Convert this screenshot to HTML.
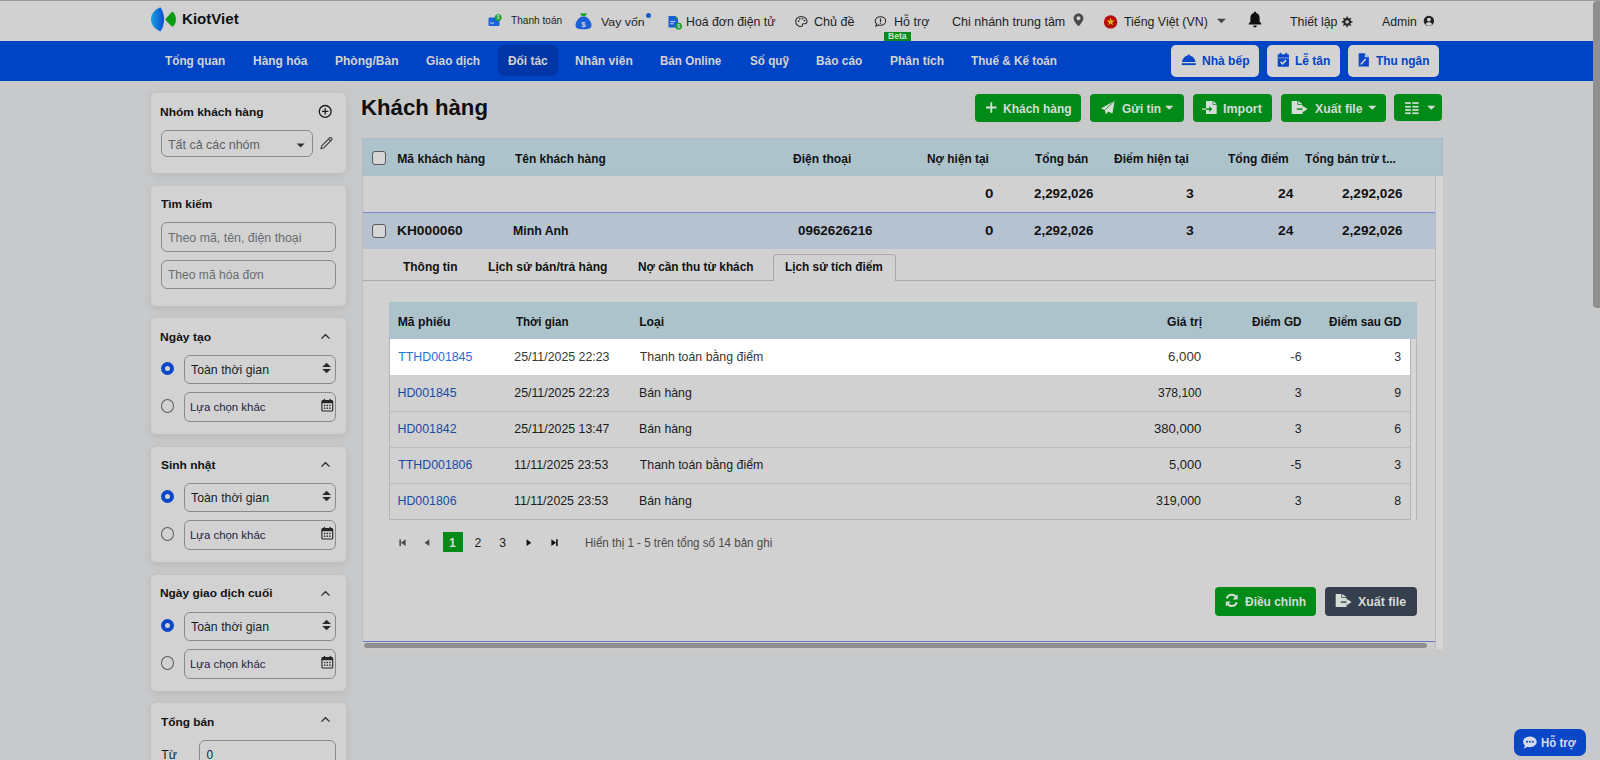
<!DOCTYPE html>
<html><head><meta charset="utf-8"><title>KiotViet - Khách hàng</title>
<style>
html,body{margin:0;padding:0;width:1600px;height:760px;overflow:hidden;background:#c8c9cb;font-family:"Liberation Sans",sans-serif;}
.t{position:absolute;white-space:nowrap;transform-origin:0 0;}
.r{position:absolute;}
svg.r{overflow:visible}
</style></head><body>
<div class="r" style="left:0px;top:0px;width:1600px;height:41px;background:#d1d1d1"></div>
<div class="r" style="left:0px;top:0px;width:1600px;height:1px;background:#9c9e9d"></div>
<svg class="r" style="left:150px;top:6px" width="28" height="27" viewBox="0 0 28 27"><defs><linearGradient id="lg" x1="0" y1="0" x2="1" y2="0"><stop offset="0" stop-color="#1ca2dc"/><stop offset="1" stop-color="#0a4ed2"/></linearGradient></defs><path d="M10.5 1.2 C4.5 3.5,1 8,1 13.2 C1 18.5,4.5 23,10.5 25.4 C13 22,14 17.5,14 13.2 C14 9,13 4.5,10.5 1.2Z" fill="url(#lg)"/><path d="M15 13.4 L21.5 6.3 Q22.7 5.3 23.6 6.4 C25.3 8.5,25.9 11,25.9 13.4 C25.9 15.8,25.3 18.2,23.6 20 Q22.7 21 21.5 20.2Z" fill="#0b9c12"/></svg>
<div class="t" style="left:182.44px;top:11.43px;font-size:15.55px;line-height:15.55px;font-weight:700;color:#111;transform:scaleX(0.9697);">KiotViet</div>
<svg class="r" style="left:488px;top:14px" width="14" height="13" viewBox="0 0 14 13"><rect x="0.5" y="3.5" width="11" height="8.5" rx="1.2" fill="#1a62d6"/><rect x="2" y="8.5" width="4" height="1.2" fill="#9cc0f0"/><circle cx="10.2" cy="3.6" r="3.4" fill="#16a02a"/><text x="10.2" y="5.4" font-size="5" text-anchor="middle" fill="#d3d3d3" font-family="Liberation Sans" font-weight="700">$</text></svg>
<div class="t" style="left:510.80px;top:15.74px;font-size:10.47px;line-height:10.47px;color:#1e1e1e;transform:scaleX(0.9652);">Thanh toán</div>
<svg class="r" style="left:575px;top:12px" width="17" height="18" viewBox="0 0 17 18"><path d="M5 1.2 L12 1.2 L10.5 4 L6.5 4Z" fill="#1aa82a"/><path d="M6.3 4.5 C2.5 7,0.3 10.5,0.5 13.5 C0.7 16.3,3 17.2,8.5 17.2 C14 17.2,16.3 16.3,16.5 13.5 C16.7 10.5,14.5 7,10.7 4.5Z" fill="#1a5fd8"/><text x="8.5" y="14.5" font-size="8" text-anchor="middle" fill="#d3d3d3" font-family="Liberation Sans" font-weight="700">$</text></svg>
<div class="t" style="left:600.80px;top:16.03px;font-size:11.77px;line-height:11.77px;color:#1e1e1e;transform:scaleX(1.0501);">Vay vốn</div>
<div class="r" style="left:646px;top:13px;width:5px;height:5px;background:#1a5cc4;border-radius:50%"></div>
<svg class="r" style="left:667px;top:15px" width="16" height="15" viewBox="0 0 16 15"><path d="M1.5 1 L8.5 1 L11 3.5 L11 12.5 L1.5 12.5Z" fill="#1a5fd8"/><path d="M8.3 1 L11 3.7 L8.3 3.7Z" fill="#16a02a"/><rect x="3.2" y="6" width="5" height="1.1" fill="#b5cdf2"/><rect x="3.2" y="8.2" width="3.5" height="1.1" fill="#b5cdf2"/><circle cx="11.6" cy="11.2" r="3.4" fill="#16a02a"/><text x="11.6" y="13.2" font-size="5" text-anchor="middle" fill="#d3d3d3" font-family="Liberation Sans" font-weight="700">$</text></svg>
<div class="t" style="left:685.81px;top:16.51px;font-size:11.92px;line-height:11.92px;color:#1e1e1e;transform:scaleX(1.0335);">Hoá đơn điện tử</div>
<svg class="r" style="left:794px;top:14px" width="15" height="15" viewBox="0 0 15 15"><g transform="translate(0.85,1.4) scale(0.88,0.82)"><path d="M7.2 1.2 C3.5 1.2,1 4,1 7.3 C1 10.8,3.6 13.6,7 13.6 C8.2 13.6,8.8 13,8.6 12.1 C8.4 11.1,8.6 10.2,9.8 10.2 L11.2 10.2 C12.8 10.2,13.8 9.1,13.8 7.4 C13.8 3.8,11 1.2,7.2 1.2Z" fill="none" stroke="#2a2a2a" stroke-width="1.2"/><circle cx="4.3" cy="7" r="1" fill="#2a2a2a"/><circle cx="5.6" cy="4.2" r="1" fill="#2a2a2a"/><circle cx="8.8" cy="4" r="1" fill="#2a2a2a"/><circle cx="10.9" cy="6.3" r="1" fill="#2a2a2a"/></g></svg>
<div class="t" style="left:813.87px;top:16.51px;font-size:11.92px;line-height:11.92px;color:#1e1e1e;transform:scaleX(1.0562);">Chủ đề</div>
<svg class="r" style="left:874px;top:14px" width="14" height="14" viewBox="0 0 14 14"><g transform="translate(0.35,1.45) scale(0.87,0.84)"><path d="M7 1.5 C3.6 1.5,1 3.8,1 6.6 C1 8,1.6 9.2,2.6 10.1 L1.8 12.7 L4.8 11.3 C5.5 11.6,6.2 11.7,7 11.7 C10.4 11.7,13 9.4,13 6.6 C13 3.8,10.4 1.5,7 1.5Z" fill="none" stroke="#2a2a2a" stroke-width="1.25"/><rect x="6.35" y="3.6" width="1.4" height="4.2" fill="#2a2a2a"/><rect x="6.35" y="8.6" width="1.4" height="1.4" fill="#2a2a2a"/></g></svg>
<div class="t" style="left:893.50px;top:16.51px;font-size:11.92px;line-height:11.92px;color:#1e1e1e;transform:scaleX(1.0519);">Hỗ trợ</div>
<div class="r" style="left:884px;top:32px;width:27px;height:9px;background:#0f8a1c"></div>
<div class="t" style="left:887.90px;top:32.17px;font-size:9.01px;line-height:9.01px;font-weight:700;color:#cfe3cf;transform:scaleX(0.9512);">Beta</div>
<div class="t" style="left:952.12px;top:16.06px;font-size:12.21px;line-height:12.21px;color:#1e1e1e;transform:scaleX(1.0245);">Chi nhánh trung tâm</div>
<svg class="r" style="left:1073px;top:13.3px" width="12" height="14" viewBox="0 0 12 14"><path d="M5.5 0.6 C2.6 0.6,0.6 2.8,0.6 5.4 C0.6 8.6,5.5 13.2,5.5 13.2 C5.5 13.2,10.4 8.6,10.4 5.4 C10.4 2.8,8.4 0.6,5.5 0.6Z M5.5 3.3 A2 2 0 1 1 5.49 3.3Z" fill="#4a4a4a" fill-rule="evenodd"/></svg>
<svg class="r" style="left:1103px;top:14px" width="15" height="15" viewBox="0 0 15 15"><circle cx="7.6" cy="7.9" r="6.7" fill="#b80a0a"/><path d="M7.6 3.6 L8.6 6.6 L11.7 6.6 L9.2 8.5 L10.1 11.5 L7.6 9.6 L5.1 11.5 L6 8.5 L3.5 6.6 L6.6 6.6Z" fill="#e2b800"/></svg>
<div class="t" style="left:1123.55px;top:16.06px;font-size:12.21px;line-height:12.21px;color:#1e1e1e;transform:scaleX(1.0122);">Tiếng Việt (VN)</div>
<svg class="r" style="left:1216px;top:18px" width="11" height="6" viewBox="0 0 11 6"><path d="M1 0.8 L9.8 0.8 L5.4 5.2Z" fill="#444"/></svg>
<svg class="r" style="left:1248px;top:11px" width="14" height="18" viewBox="0 0 14 18"><path d="M7 0.8 C7.8 0.8,8.3 1.3,8.3 2.1 C10.6 2.7,11.6 4.6,11.6 7 L11.6 10.4 L13.2 12.6 L13.2 13.6 L0.8 13.6 L0.8 12.6 L2.4 10.4 L2.4 7 C2.4 4.6,3.4 2.7,5.7 2.1 C5.7 1.3,6.2 0.8,7 0.8Z M5.2 14.6 L8.8 14.6 C8.8 15.8,8 16.6,7 16.6 C6 16.6,5.2 15.8,5.2 14.6Z" fill="#101010"/></svg>
<div class="t" style="left:1289.55px;top:16.06px;font-size:12.21px;line-height:12.21px;color:#1e1e1e;transform:scaleX(1.0141);">Thiết lập</div>
<svg class="r" style="left:1341px;top:16px" width="12" height="12" viewBox="0 0 12 12"><path d="M6 0.5 L7.3 0.5 L7.6 2.2 L8.9 2.8 L10.3 1.8 L11.2 2.7 L10.2 4.1 L10.8 5.4 L12.5 5.7 L12.5 7 L10.8 7.3 L10.2 8.6 L11.2 10 L10.3 10.9 L8.9 9.9 L7.6 10.5 L7.3 12.2 L6 12.2 L5.7 10.5 L4.4 9.9 L3 10.9 L2.1 10 L3.1 8.6 L2.5 7.3 L0.8 7 L0.8 5.7 L2.5 5.4 L3.1 4.1 L2.1 2.7 L3 1.8 L4.4 2.8 L5.7 2.2Z M6.65 4.5 A1.85 1.85 0 1 0 6.66 4.5Z" fill="#2a2a2a" fill-rule="evenodd" transform="scale(0.92)"/></svg>
<div class="t" style="left:1382.00px;top:15.59px;font-size:12.06px;line-height:12.06px;color:#1e1e1e;transform:scaleX(1.0174);">Admin</div>
<svg class="r" style="left:1423px;top:15px" width="12" height="12" viewBox="0 0 12 12"><circle cx="5.9" cy="5.9" r="5.2" fill="#222"/><circle cx="5.9" cy="4.6" r="1.9" fill="#d1d1d1"/><path d="M2.6 9.3 C3.4 7.9,4.5 7.3,5.9 7.3 C7.3 7.3,8.4 7.9,9.2 9.3 C8.4 10.2,7.2 10.8,5.9 10.8 C4.6 10.8,3.4 10.2,2.6 9.3Z" fill="#d1d1d1"/></svg>
<div class="r" style="left:0px;top:41px;width:1593px;height:40px;background:#0044c6"></div>
<div class="r" style="left:497.5px;top:45px;width:60.0px;height:31px;background:#0036a6;border-radius:6px"></div>
<div class="t" style="left:165.38px;top:54.97px;font-size:12.79px;line-height:12.79px;font-weight:700;color:#d3d3d3;transform:scaleX(0.9230);">Tổng quan</div>
<div class="t" style="left:252.91px;top:54.97px;font-size:12.79px;line-height:12.79px;font-weight:700;color:#d3d3d3;transform:scaleX(0.9359);">Hàng hóa</div>
<div class="t" style="left:335.16px;top:54.97px;font-size:12.79px;line-height:12.79px;font-weight:700;color:#d3d3d3;transform:scaleX(0.9412);">Phòng/Bàn</div>
<div class="t" style="left:425.52px;top:54.97px;font-size:12.79px;line-height:12.79px;font-weight:700;color:#d3d3d3;transform:scaleX(0.9291);">Giao dịch</div>
<div class="t" style="left:507.80px;top:54.97px;font-size:12.79px;line-height:12.79px;font-weight:700;color:#d3d3d3;transform:scaleX(0.9306);">Đối tác</div>
<div class="t" style="left:574.85px;top:54.97px;font-size:12.79px;line-height:12.79px;font-weight:700;color:#d3d3d3;transform:scaleX(0.9466);">Nhân viên</div>
<div class="t" style="left:660.19px;top:54.97px;font-size:12.79px;line-height:12.79px;font-weight:700;color:#d3d3d3;transform:scaleX(0.9073);">Bán Online</div>
<div class="t" style="left:749.55px;top:54.97px;font-size:12.79px;line-height:12.79px;font-weight:700;color:#d3d3d3;transform:scaleX(0.9145);">Sổ quỹ</div>
<div class="t" style="left:816.17px;top:54.97px;font-size:12.79px;line-height:12.79px;font-weight:700;color:#d3d3d3;transform:scaleX(0.9307);">Báo cáo</div>
<div class="t" style="left:889.76px;top:54.97px;font-size:12.79px;line-height:12.79px;font-weight:700;color:#d3d3d3;transform:scaleX(0.9410);">Phân tích</div>
<div class="t" style="left:971.28px;top:54.97px;font-size:12.79px;line-height:12.79px;font-weight:700;color:#d3d3d3;transform:scaleX(0.9175);">Thuế &amp; Kế toán</div>
<div class="r" style="left:1171px;top:45px;width:88px;height:32px;background:#d3d3d3;border-radius:5px"></div>
<div class="r" style="left:1267px;top:45px;width:73px;height:32px;background:#d3d3d3;border-radius:5px"></div>
<div class="r" style="left:1348px;top:45px;width:91px;height:32px;background:#d3d3d3;border-radius:5px"></div>
<div class="t" style="left:1201.76px;top:54.97px;font-size:12.79px;line-height:12.79px;font-weight:700;color:#0044c6;transform:scaleX(0.9431);">Nhà bếp</div>
<div class="t" style="left:1295.16px;top:54.97px;font-size:12.79px;line-height:12.79px;font-weight:700;color:#0044c6;transform:scaleX(0.9404);">Lễ tân</div>
<div class="t" style="left:1375.58px;top:54.97px;font-size:12.79px;line-height:12.79px;font-weight:700;color:#0044c6;transform:scaleX(0.9283);">Thu ngân</div>
<svg class="r" style="left:1181px;top:52px" width="16" height="15" viewBox="0 0 16 15"><path d="M7.75 2.6 C8.5 2.6,8.8 3,8.8 3.5 C11.9 4.1,14 6.5,14.5 10 L1 10 C1.5 6.5,3.6 4.1,6.7 3.5 C6.7 3,7 2.6,7.75 2.6Z" fill="#0a46c8"/><rect x="0.8" y="11.2" width="14" height="1.9" fill="#0a46c8"/></svg>
<svg class="r" style="left:1276px;top:52px" width="15" height="16" viewBox="0 0 15 16"><rect x="1.7" y="2.3" width="11.3" height="12.4" rx="1" fill="#0a46c8"/><rect x="3.6" y="0.8" width="1.8" height="2.6" fill="#0a46c8"/><rect x="9.3" y="0.8" width="1.8" height="2.6" fill="#0a46c8"/><rect x="1.7" y="5.5" width="11.3" height="0.9" fill="#8fa6d8"/><path d="M4.6 9.9 L6.6 11.8 L10.1 8.1" stroke="#d3d3d3" stroke-width="1.6" fill="none"/></svg>
<svg class="r" style="left:1358px;top:52px" width="12" height="16" viewBox="0 0 12 16"><path d="M0.7 1.2 L6.8 1.2 L10.9 5.3 L10.9 14.4 L0.7 14.4Z" fill="#0a46c8"/><path d="M6.9 1.2 L6.9 5.2 L10.9 5.2Z" fill="#b8c4e0"/><path d="M3.2 12 L7.3 7.4" stroke="#d3d3d3" stroke-width="1.5" stroke-linecap="round"/></svg>
<div class="r" style="left:1593px;top:1px;width:7px;height:307px;background:#8f8f8f;border-radius:4px 0 0 4px"></div>
<div class="r" style="left:151px;top:93px;width:195px;height:80px;background:#d2d2d2;border-radius:5px;box-shadow:0 2px 10px rgba(0,0,0,0.09)"></div>
<div class="r" style="left:151px;top:186px;width:195px;height:120px;background:#d2d2d2;border-radius:5px;box-shadow:0 2px 10px rgba(0,0,0,0.09)"></div>
<div class="r" style="left:151px;top:318px;width:195px;height:116px;background:#d2d2d2;border-radius:5px;box-shadow:0 2px 10px rgba(0,0,0,0.09)"></div>
<div class="r" style="left:151px;top:447px;width:195px;height:115px;background:#d2d2d2;border-radius:5px;box-shadow:0 2px 10px rgba(0,0,0,0.09)"></div>
<div class="r" style="left:151px;top:575px;width:195px;height:116px;background:#d2d2d2;border-radius:5px;box-shadow:0 2px 10px rgba(0,0,0,0.09)"></div>
<div class="r" style="left:151px;top:703px;width:195px;height:97px;background:#d2d2d2;border-radius:5px;box-shadow:0 2px 10px rgba(0,0,0,0.09)"></div>
<div class="t" style="left:160.16px;top:106.58px;font-size:11.48px;line-height:11.48px;font-weight:700;color:#121212;transform:scaleX(1.0422);">Nhóm khách hàng</div>
<svg class="r" style="left:318px;top:104px" width="15" height="15" viewBox="0 0 15 15"><circle cx="7.2" cy="7.4" r="5.9" fill="none" stroke="#1a1a1a" stroke-width="1.3"/><path d="M7.2 4.2 L7.2 10.6 M4 7.4 L10.4 7.4" stroke="#1a1a1a" stroke-width="1.3"/></svg>
<div class="r" style="left:161px;top:130px;width:152px;height:27px;border:1px solid #8a8a8a;border-radius:6px;box-sizing:border-box"></div>
<div class="t" style="left:167.75px;top:139.39px;font-size:12.06px;line-height:12.06px;color:#5b6068;transform:scaleX(1.0319);">Tất cả các nhóm</div>
<svg class="r" style="left:296px;top:143px" width="10" height="6" viewBox="0 0 10 6"><path d="M0.6 0.6 L8.6 0.6 L4.6 4.6Z" fill="#333"/></svg>
<svg class="r" style="left:319px;top:136px" width="15" height="15" viewBox="0 0 15 15"><path d="M2 12.6 L2.6 10 L10.6 2 C11.2 1.4,12 1.4,12.6 2 C13.2 2.6,13.2 3.4,12.6 4 L4.6 12 Z M9.6 3 L11.6 5" fill="none" stroke="#444" stroke-width="1.1"/></svg>
<div class="t" style="left:161.48px;top:199.18px;font-size:11.48px;line-height:11.48px;font-weight:700;color:#121212;transform:scaleX(1.0320);">Tìm kiếm</div>
<div class="r" style="left:161px;top:222px;width:175px;height:30px;border:1px solid #8a8a8a;border-radius:6px;box-sizing:border-box"></div>
<div class="t" style="left:168.25px;top:231.86px;font-size:12.21px;line-height:12.21px;color:#686c72;transform:scaleX(1.0142);">Theo mã, tên, điện thoại</div>
<div class="r" style="left:161px;top:260px;width:175px;height:29px;border:1px solid #8a8a8a;border-radius:6px;box-sizing:border-box"></div>
<div class="t" style="left:168.26px;top:269.06px;font-size:12.21px;line-height:12.21px;color:#686c72;transform:scaleX(0.9891);">Theo mã hóa đơn</div>
<div class="t" style="left:160.15px;top:331.58px;font-size:11.48px;line-height:11.48px;font-weight:700;color:#121212;transform:scaleX(1.0552);">Ngày tạo</div>
<svg class="r" style="left:320px;top:333px" width="12" height="8" viewBox="0 0 12 8"><path d="M1.4 5.6 L5.5 1.7 L9.6 5.6" fill="none" stroke="#2a2a2a" stroke-width="1.25"/></svg>
<div class="r" style="left:161px;top:362px;width:13px;height:13px;border:4px solid #0a46c8;border-radius:50%;box-sizing:border-box;background:#d3d3d3"></div>
<div class="r" style="left:184px;top:355px;width:152px;height:29px;border:1px solid #8a8a8a;border-radius:6px;box-sizing:border-box"></div>
<div class="t" style="left:191.15px;top:364.71px;font-size:11.92px;line-height:11.92px;color:#1c1c1c;transform:scaleX(1.0353);">Toàn thời gian</div>
<svg class="r" style="left:321px;top:362px" width="12" height="13" viewBox="0 0 12 13"><path d="M5.6 0.8 L10 5 L1.2 5Z M1.2 7 L10 7 L5.6 11.2Z" fill="#2a2a2a"/></svg>
<div class="r" style="left:161px;top:399px;width:13px;height:14px;border:1px solid #5a5a5a;border-radius:50%;box-sizing:border-box"></div>
<div class="r" style="left:184px;top:392px;width:152px;height:30px;border:1px solid #8a8a8a;border-radius:6px;box-sizing:border-box"></div>
<div class="t" style="left:190.49px;top:401.65px;font-size:11.05px;line-height:11.05px;color:#1c1c40;transform:scaleX(1.0318);">Lựa chọn khác</div>
<svg class="r" style="left:320.5px;top:398px" width="13" height="15" viewBox="0 0 13 15"><rect x="0.9" y="2.6" width="10.8" height="10.4" rx="1" fill="none" stroke="#262626" stroke-width="1.1"/><rect x="0.9" y="2.6" width="10.8" height="2.6" fill="#262626"/><rect x="2.7" y="0.9" width="1.4" height="2.6" fill="#262626"/><rect x="8.5" y="0.9" width="1.4" height="2.6" fill="#262626"/><g fill="#303030"><rect x="2.9" y="6.8" width="1.5" height="1.4"/><rect x="5.55" y="6.8" width="1.5" height="1.4"/><rect x="8.2" y="6.8" width="1.5" height="1.4"/><rect x="2.9" y="9.5" width="1.5" height="1.4"/><rect x="5.55" y="9.5" width="1.5" height="1.4"/><rect x="8.2" y="9.5" width="1.5" height="1.4"/></g></svg>
<div class="t" style="left:160.64px;top:459.58px;font-size:11.48px;line-height:11.48px;font-weight:700;color:#121212;transform:scaleX(1.0427);">Sinh nhật</div>
<svg class="r" style="left:320px;top:461px" width="12" height="8" viewBox="0 0 12 8"><path d="M1.4 5.6 L5.5 1.7 L9.6 5.6" fill="none" stroke="#2a2a2a" stroke-width="1.25"/></svg>
<div class="r" style="left:161px;top:490px;width:13px;height:13px;border:4px solid #0a46c8;border-radius:50%;box-sizing:border-box;background:#d3d3d3"></div>
<div class="r" style="left:184px;top:483px;width:152px;height:29px;border:1px solid #8a8a8a;border-radius:6px;box-sizing:border-box"></div>
<div class="t" style="left:191.15px;top:492.71px;font-size:11.92px;line-height:11.92px;color:#1c1c1c;transform:scaleX(1.0353);">Toàn thời gian</div>
<svg class="r" style="left:321px;top:490px" width="12" height="13" viewBox="0 0 12 13"><path d="M5.6 0.8 L10 5 L1.2 5Z M1.2 7 L10 7 L5.6 11.2Z" fill="#2a2a2a"/></svg>
<div class="r" style="left:161px;top:527px;width:13px;height:14px;border:1px solid #5a5a5a;border-radius:50%;box-sizing:border-box"></div>
<div class="r" style="left:184px;top:520px;width:152px;height:30px;border:1px solid #8a8a8a;border-radius:6px;box-sizing:border-box"></div>
<div class="t" style="left:190.49px;top:529.65px;font-size:11.05px;line-height:11.05px;color:#1c1c40;transform:scaleX(1.0318);">Lựa chọn khác</div>
<svg class="r" style="left:320.5px;top:526px" width="13" height="15" viewBox="0 0 13 15"><rect x="0.9" y="2.6" width="10.8" height="10.4" rx="1" fill="none" stroke="#262626" stroke-width="1.1"/><rect x="0.9" y="2.6" width="10.8" height="2.6" fill="#262626"/><rect x="2.7" y="0.9" width="1.4" height="2.6" fill="#262626"/><rect x="8.5" y="0.9" width="1.4" height="2.6" fill="#262626"/><g fill="#303030"><rect x="2.9" y="6.8" width="1.5" height="1.4"/><rect x="5.55" y="6.8" width="1.5" height="1.4"/><rect x="8.2" y="6.8" width="1.5" height="1.4"/><rect x="2.9" y="9.5" width="1.5" height="1.4"/><rect x="5.55" y="9.5" width="1.5" height="1.4"/><rect x="8.2" y="9.5" width="1.5" height="1.4"/></g></svg>
<div class="t" style="left:160.17px;top:588.08px;font-size:11.48px;line-height:11.48px;font-weight:700;color:#121212;transform:scaleX(1.0383);">Ngày giao dịch cuối</div>
<svg class="r" style="left:320px;top:590px" width="12" height="8" viewBox="0 0 12 8"><path d="M1.4 5.6 L5.5 1.7 L9.6 5.6" fill="none" stroke="#2a2a2a" stroke-width="1.25"/></svg>
<div class="r" style="left:161px;top:619px;width:13px;height:13px;border:4px solid #0a46c8;border-radius:50%;box-sizing:border-box;background:#d3d3d3"></div>
<div class="r" style="left:184px;top:612px;width:152px;height:29px;border:1px solid #8a8a8a;border-radius:6px;box-sizing:border-box"></div>
<div class="t" style="left:191.15px;top:621.71px;font-size:11.92px;line-height:11.92px;color:#1c1c1c;transform:scaleX(1.0353);">Toàn thời gian</div>
<svg class="r" style="left:321px;top:619px" width="12" height="13" viewBox="0 0 12 13"><path d="M5.6 0.8 L10 5 L1.2 5Z M1.2 7 L10 7 L5.6 11.2Z" fill="#2a2a2a"/></svg>
<div class="r" style="left:161px;top:656px;width:13px;height:14px;border:1px solid #5a5a5a;border-radius:50%;box-sizing:border-box"></div>
<div class="r" style="left:184px;top:649px;width:152px;height:30px;border:1px solid #8a8a8a;border-radius:6px;box-sizing:border-box"></div>
<div class="t" style="left:190.49px;top:658.65px;font-size:11.05px;line-height:11.05px;color:#1c1c40;transform:scaleX(1.0318);">Lựa chọn khác</div>
<svg class="r" style="left:320.5px;top:655px" width="13" height="15" viewBox="0 0 13 15"><rect x="0.9" y="2.6" width="10.8" height="10.4" rx="1" fill="none" stroke="#262626" stroke-width="1.1"/><rect x="0.9" y="2.6" width="10.8" height="2.6" fill="#262626"/><rect x="2.7" y="0.9" width="1.4" height="2.6" fill="#262626"/><rect x="8.5" y="0.9" width="1.4" height="2.6" fill="#262626"/><g fill="#303030"><rect x="2.9" y="6.8" width="1.5" height="1.4"/><rect x="5.55" y="6.8" width="1.5" height="1.4"/><rect x="8.2" y="6.8" width="1.5" height="1.4"/><rect x="2.9" y="9.5" width="1.5" height="1.4"/><rect x="5.55" y="9.5" width="1.5" height="1.4"/><rect x="8.2" y="9.5" width="1.5" height="1.4"/></g></svg>
<div class="t" style="left:161.38px;top:715.86px;font-size:11.63px;line-height:11.63px;font-weight:700;color:#121212;transform:scaleX(1.0192);">Tổng bán</div>
<svg class="r" style="left:320px;top:716px" width="12" height="8" viewBox="0 0 12 8"><path d="M1.4 5.6 L5.5 1.7 L9.6 5.6" fill="none" stroke="#2a2a2a" stroke-width="1.25"/></svg>
<div class="r" style="left:199px;top:740px;width:137px;height:50px;border:1px solid #8a8a8a;border-radius:6px;box-sizing:border-box"></div>
<div class="t" style="left:161.26px;top:748.96px;font-size:12.21px;line-height:12.21px;color:#1c1c1c;">Từ</div>
<div class="t" style="left:206.42px;top:749.71px;font-size:11.92px;line-height:11.92px;color:#1c1c40;">0</div>
<div class="t" style="left:361.45px;top:97.07px;font-size:21.66px;line-height:21.66px;font-weight:700;color:#0e0e0e;transform:scaleX(1.0243);">Khách hàng</div>
<div class="r" style="left:975px;top:93.5px;width:106px;height:28.5px;background:#008a17;border-radius:4px"></div>
<div class="r" style="left:1090px;top:93.5px;width:94px;height:28.5px;background:#008a17;border-radius:4px"></div>
<div class="r" style="left:1193px;top:93.5px;width:79px;height:28.5px;background:#008a17;border-radius:4px"></div>
<div class="r" style="left:1281px;top:93.5px;width:105px;height:28.5px;background:#008a17;border-radius:4px"></div>
<div class="r" style="left:1394px;top:93.5px;width:48px;height:27.700000000000003px;background:#008a17;border-radius:4px"></div>
<div class="t" style="left:1002.86px;top:102.97px;font-size:12.79px;line-height:12.79px;font-weight:700;color:#d6dcd6;transform:scaleX(0.9385);">Khách hàng</div>
<svg class="r" style="left:984.5px;top:101px" width="13" height="13" viewBox="0 0 13 13"><path d="M6.3 1.2 L6.3 11.7 M1 6.5 L11.5 6.5" stroke="#d6dcd6" stroke-width="1.8"/></svg>
<div class="t" style="left:1121.52px;top:102.97px;font-size:12.79px;line-height:12.79px;font-weight:700;color:#d6dcd6;transform:scaleX(0.9342);">Gửi tin</div>
<svg class="r" style="left:1100px;top:100px" width="16" height="16" viewBox="0 0 16 16"><path d="M14.6 0.8 L1 8.6 L4.8 9.9 L6 14.4 L8.1 11.4 L12.5 13.5Z" fill="#d6dcd6"/><path d="M4.9 9.8 L13.9 1.6" stroke="#008a17" stroke-width="0.8"/></svg>
<svg class="r" style="left:1165px;top:105px" width="9" height="6" viewBox="0 0 9 6"><path d="M0.1 0.8 L8.4 0.8 L4.25 4.8Z" fill="#d6dcd6"/></svg>
<div class="t" style="left:1223.33px;top:102.97px;font-size:12.79px;line-height:12.79px;font-weight:700;color:#d6dcd6;transform:scaleX(0.9753);">Import</div>
<svg class="r" style="left:1202px;top:99px" width="16" height="16" viewBox="0 0 16 16"><path d="M4 1.9 L10.6 1.9 L10.6 5.7 L14.7 5.7 L14.7 15.1 L4 15.1Z" fill="#d6dcd6"/><path d="M11.3 1.9 L14.7 5 L11.3 5Z" fill="#d6dcd6"/><rect x="4" y="9.4" width="4" height="1.4" fill="#008a17"/><path d="M7.3 7.2 L10.3 10.1 L7.3 13Z" fill="#008a17"/><rect x="0.4" y="9.4" width="3.6" height="1.4" fill="#d6dcd6"/></svg>
<div class="t" style="left:1314.88px;top:102.97px;font-size:12.79px;line-height:12.79px;font-weight:700;color:#d6dcd6;transform:scaleX(0.9569);">Xuất file</div>
<svg class="r" style="left:1291px;top:99px" width="18" height="16" viewBox="0 0 18 16"><path d="M0.7 1.9 L6.4 1.9 L6.4 5.8 L11.6 5.8 L11.6 14.9 L0.7 14.9Z" fill="#d6dcd6"/><path d="M7.2 1.9 L11.4 4.9 L7.2 4.9Z" fill="#d6dcd6"/><rect x="5.8" y="9.4" width="5.8" height="1.4" fill="#008a17"/><rect x="11.6" y="9.4" width="1.5" height="1.4" fill="#d6dcd6"/><path d="M11.5 6.7 L16.6 10.1 L11.5 13.4Z" fill="#d6dcd6"/></svg>
<svg class="r" style="left:1367.5px;top:105px" width="9" height="6" viewBox="0 0 9 6"><path d="M0.1 0.8 L8.4 0.8 L4.25 4.8Z" fill="#d6dcd6"/></svg>
<svg class="r" style="left:1404px;top:101px" width="16" height="14" viewBox="0 0 16 14"><g fill="#d6dcd6"><rect x="1.1" y="1.2" width="5.7" height="1.7"/><rect x="8.3" y="1.2" width="6.3" height="1.7"/><rect x="1.1" y="4.9" width="5.7" height="1.7"/><rect x="8.3" y="4.9" width="6.3" height="1.7"/><rect x="1.1" y="8.1" width="5.7" height="1.7"/><rect x="8.3" y="8.1" width="6.3" height="1.7"/><rect x="1.1" y="11.4" width="5.7" height="1.7"/><rect x="8.3" y="11.4" width="6.3" height="1.7"/></g></svg>
<svg class="r" style="left:1427.2px;top:105px" width="9" height="6" viewBox="0 0 9 6"><path d="M0.1 0.8 L8.4 0.8 L4.25 4.8Z" fill="#d6dcd6"/></svg>
<div class="r" style="left:362px;top:138px;width:1081px;height:39px;background:#adc3cb;border:1px solid #a3bcc6;box-shadow:inset 0 0 0 2px #b0c0cb;box-sizing:border-box"></div>
<div class="r" style="left:363px;top:176px;width:1080px;height:473px;background:#d1d1d1"></div>
<div class="r" style="left:1435px;top:176px;width:8px;height:473px;background:#d6d6d6;border-left:1px solid #b9b9b9;box-sizing:border-box"></div>
<div class="r" style="left:372px;top:151px;width:14px;height:14px;border:1px solid #5a5a5a;border-radius:3px;box-sizing:border-box;background:#d6d6d6"></div>
<div class="t" style="left:397.15px;top:152.96px;font-size:12.21px;line-height:12.21px;font-weight:700;color:#121212;">Mã khách hàng</div>
<div class="t" style="left:514.88px;top:152.96px;font-size:12.21px;line-height:12.21px;font-weight:700;color:#121212;transform:scaleX(0.9776);">Tên khách hàng</div>
<div class="t" style="left:792.50px;top:152.96px;font-size:12.21px;line-height:12.21px;font-weight:700;color:#121212;transform:scaleX(0.9873);">Điện thoại</div>
<div class="t" style="left:927.17px;top:152.96px;font-size:12.21px;line-height:12.21px;font-weight:700;color:#121212;transform:scaleX(0.9733);">Nợ hiện tại</div>
<div class="t" style="left:1034.88px;top:152.96px;font-size:12.21px;line-height:12.21px;font-weight:700;color:#121212;transform:scaleX(0.9707);">Tổng bán</div>
<div class="t" style="left:1114.00px;top:152.96px;font-size:12.21px;line-height:12.21px;font-weight:700;color:#121212;transform:scaleX(0.9839);">Điểm hiện tại</div>
<div class="t" style="left:1227.88px;top:152.96px;font-size:12.21px;line-height:12.21px;font-weight:700;color:#121212;transform:scaleX(0.9848);">Tổng điểm</div>
<div class="t" style="left:1305.18px;top:152.96px;font-size:12.21px;line-height:12.21px;font-weight:700;color:#121212;transform:scaleX(0.9712);">Tổng bán trừ t...</div>
<div class="r" style="left:363px;top:212px;width:1072px;height:1px;background:#7d86cc"></div>
<div class="t" style="left:985.15px;top:188.46px;font-size:12.21px;line-height:12.21px;font-weight:700;color:#121212;transform:scaleX(1.2371);">0</div>
<div class="t" style="left:1034.10px;top:188.46px;font-size:12.21px;line-height:12.21px;font-weight:700;color:#121212;transform:scaleX(1.0939);">2,292,026</div>
<div class="t" style="left:1185.72px;top:188.46px;font-size:12.21px;line-height:12.21px;font-weight:700;color:#121212;transform:scaleX(1.1467);">3</div>
<div class="t" style="left:1277.58px;top:188.46px;font-size:12.21px;line-height:12.21px;font-weight:700;color:#121212;transform:scaleX(1.1376);">24</div>
<div class="t" style="left:1341.59px;top:188.46px;font-size:12.21px;line-height:12.21px;font-weight:700;color:#121212;transform:scaleX(1.1145);">2,292,026</div>
<div class="r" style="left:363px;top:213px;width:1072px;height:36px;background:#b6c2d0"></div>
<div class="r" style="left:372px;top:223.5px;width:14px;height:14.0px;border:1px solid #5a5a5a;border-radius:3px;box-sizing:border-box;background:#d6d6d6"></div>
<div class="t" style="left:396.54px;top:225.46px;font-size:12.21px;line-height:12.21px;font-weight:700;color:#121212;transform:scaleX(1.1268);">KH000060</div>
<div class="t" style="left:513.14px;top:225.46px;font-size:12.21px;line-height:12.21px;font-weight:700;color:#121212;transform:scaleX(1.0075);">Minh Anh</div>
<div class="t" style="left:797.71px;top:225.46px;font-size:12.21px;line-height:12.21px;font-weight:700;color:#121212;transform:scaleX(1.0985);">0962626216</div>
<div class="t" style="left:985.15px;top:225.46px;font-size:12.21px;line-height:12.21px;font-weight:700;color:#121212;transform:scaleX(1.2371);">0</div>
<div class="t" style="left:1034.10px;top:225.46px;font-size:12.21px;line-height:12.21px;font-weight:700;color:#121212;transform:scaleX(1.0939);">2,292,026</div>
<div class="t" style="left:1185.72px;top:225.46px;font-size:12.21px;line-height:12.21px;font-weight:700;color:#121212;transform:scaleX(1.1467);">3</div>
<div class="t" style="left:1277.58px;top:225.46px;font-size:12.21px;line-height:12.21px;font-weight:700;color:#121212;transform:scaleX(1.1376);">24</div>
<div class="t" style="left:1341.59px;top:225.46px;font-size:12.21px;line-height:12.21px;font-weight:700;color:#121212;transform:scaleX(1.1145);">2,292,026</div>
<div class="r" style="left:362px;top:177px;width:1px;height:465px;background:#bdbdbd"></div>
<div class="r" style="left:363px;top:280px;width:1072px;height:1px;background:#a9a9a9"></div>
<div class="r" style="left:772.5px;top:253.5px;width:123.5px;height:27.5px;background:#d1d1d1;border:1px solid #a9a9a9;border-bottom:none;border-radius:4px 4px 0 0;box-sizing:border-box"></div>
<div class="t" style="left:402.58px;top:261.26px;font-size:12.21px;line-height:12.21px;font-weight:700;color:#121212;transform:scaleX(0.9799);">Thông tin</div>
<div class="t" style="left:487.65px;top:261.26px;font-size:12.21px;line-height:12.21px;font-weight:700;color:#121212;transform:scaleX(0.9894);">Lịch sử bán/trả hàng</div>
<div class="t" style="left:638.47px;top:261.26px;font-size:12.21px;line-height:12.21px;font-weight:700;color:#121212;transform:scaleX(0.9686);">Nợ cần thu từ khách</div>
<div class="t" style="left:785.47px;top:261.26px;font-size:12.21px;line-height:12.21px;font-weight:700;color:#121212;transform:scaleX(0.9678);">Lịch sử tích điểm</div>
<div class="r" style="left:388.5px;top:302px;width:1028.5px;height:36.5px;background:#adc3cb"></div>
<div class="r" style="left:388.5px;top:338.5px;width:1028.5px;height:181.0px;background:#d1d1d1;border:1px solid #b5b5b5;border-top:none;box-sizing:border-box"></div>
<div class="r" style="left:1409.5px;top:338.5px;width:7.5px;height:181.0px;border-left:1px solid #b5b5b5;border-right:1px solid #b5b5b5;box-sizing:border-box;background:#d6d6d6"></div>
<div class="r" style="left:389.5px;top:338.5px;width:1020.5px;height:36.0px;background:#ffffff"></div>
<div class="r" style="left:389.5px;top:410.5px;width:1020.0px;height:1.0px;background:#bcbcbc"></div>
<div class="r" style="left:389.5px;top:446.5px;width:1020.0px;height:1.0px;background:#bcbcbc"></div>
<div class="r" style="left:389.5px;top:482.5px;width:1020.0px;height:1.0px;background:#bcbcbc"></div>
<div class="t" style="left:397.64px;top:316.16px;font-size:12.21px;line-height:12.21px;font-weight:700;color:#121212;">Mã phiếu</div>
<div class="t" style="left:515.68px;top:316.16px;font-size:12.21px;line-height:12.21px;font-weight:700;color:#121212;transform:scaleX(0.9473);">Thời gian</div>
<div class="t" style="left:639.15px;top:316.16px;font-size:12.21px;line-height:12.21px;font-weight:700;color:#121212;">Loại</div>
<div class="t" style="left:1166.82px;top:316.16px;font-size:12.21px;line-height:12.21px;font-weight:700;color:#121212;transform:scaleX(0.9929);">Giá trị</div>
<div class="t" style="left:1252.20px;top:316.16px;font-size:12.21px;line-height:12.21px;font-weight:700;color:#121212;transform:scaleX(0.9601);">Điểm GD</div>
<div class="t" style="left:1329.00px;top:316.16px;font-size:12.21px;line-height:12.21px;font-weight:700;color:#121212;transform:scaleX(0.9542);">Điểm sau GD</div>
<div class="t" style="left:398.25px;top:351.14px;font-size:12.35px;line-height:12.35px;color:#1a72dc;">TTHD001845</div>
<div class="t" style="left:514.28px;top:351.14px;font-size:12.35px;line-height:12.35px;color:#363636;">25/11/2025 22:23</div>
<div class="t" style="left:639.75px;top:351.14px;font-size:12.35px;line-height:12.35px;color:#363636;">Thanh toán bằng điểm</div>
<div class="t" style="left:1168.24px;top:351.14px;font-size:12.35px;line-height:12.35px;color:#363636;transform:scaleX(1.0736);">6,000</div>
<div class="t" style="left:1290.62px;top:351.14px;font-size:12.35px;line-height:12.35px;color:#363636;">-6</div>
<div class="t" style="left:1394.20px;top:351.14px;font-size:12.35px;line-height:12.35px;color:#363636;">3</div>
<div class="t" style="left:397.51px;top:387.14px;font-size:12.35px;line-height:12.35px;color:#1a4aa6;">HD001845</div>
<div class="t" style="left:514.28px;top:387.14px;font-size:12.35px;line-height:12.35px;color:#1c1c1c;">25/11/2025 22:23</div>
<div class="t" style="left:639.01px;top:387.14px;font-size:12.35px;line-height:12.35px;color:#1c1c1c;">Bán hàng</div>
<div class="t" style="left:1157.92px;top:387.14px;font-size:12.35px;line-height:12.35px;color:#1c1c1c;transform:scaleX(0.9740);">378,100</div>
<div class="t" style="left:1294.70px;top:387.14px;font-size:12.35px;line-height:12.35px;color:#1c1c1c;">3</div>
<div class="t" style="left:1394.20px;top:387.14px;font-size:12.35px;line-height:12.35px;color:#1c1c1c;">9</div>
<div class="t" style="left:397.51px;top:423.14px;font-size:12.35px;line-height:12.35px;color:#1a4aa6;">HD001842</div>
<div class="t" style="left:514.28px;top:423.14px;font-size:12.35px;line-height:12.35px;color:#1c1c1c;">25/11/2025 13:47</div>
<div class="t" style="left:639.01px;top:423.14px;font-size:12.35px;line-height:12.35px;color:#1c1c1c;">Bán hàng</div>
<div class="t" style="left:1154.08px;top:423.14px;font-size:12.35px;line-height:12.35px;color:#1c1c1c;transform:scaleX(1.0609);">380,000</div>
<div class="t" style="left:1294.70px;top:423.14px;font-size:12.35px;line-height:12.35px;color:#1c1c1c;">3</div>
<div class="t" style="left:1394.20px;top:423.14px;font-size:12.35px;line-height:12.35px;color:#1c1c1c;">6</div>
<div class="t" style="left:398.25px;top:459.14px;font-size:12.35px;line-height:12.35px;color:#1a4aa6;">TTHD001806</div>
<div class="t" style="left:514.04px;top:459.14px;font-size:12.35px;line-height:12.35px;color:#1c1c1c;">11/11/2025 23:53</div>
<div class="t" style="left:639.75px;top:459.14px;font-size:12.35px;line-height:12.35px;color:#1c1c1c;">Thanh toán bằng điểm</div>
<div class="t" style="left:1168.98px;top:459.14px;font-size:12.35px;line-height:12.35px;color:#1c1c1c;transform:scaleX(1.0492);">5,000</div>
<div class="t" style="left:1290.50px;top:459.14px;font-size:12.35px;line-height:12.35px;color:#1c1c1c;">-5</div>
<div class="t" style="left:1394.20px;top:459.14px;font-size:12.35px;line-height:12.35px;color:#1c1c1c;">3</div>
<div class="t" style="left:397.51px;top:495.14px;font-size:12.35px;line-height:12.35px;color:#1a4aa6;">HD001806</div>
<div class="t" style="left:514.04px;top:495.14px;font-size:12.35px;line-height:12.35px;color:#1c1c1c;">11/11/2025 23:53</div>
<div class="t" style="left:639.01px;top:495.14px;font-size:12.35px;line-height:12.35px;color:#1c1c1c;">Bán hàng</div>
<div class="t" style="left:1156.40px;top:495.14px;font-size:12.35px;line-height:12.35px;color:#1c1c1c;transform:scaleX(1.0083);">319,000</div>
<div class="t" style="left:1294.70px;top:495.14px;font-size:12.35px;line-height:12.35px;color:#1c1c1c;">3</div>
<div class="t" style="left:1394.20px;top:495.14px;font-size:12.35px;line-height:12.35px;color:#1c1c1c;">8</div>
<svg class="r" style="left:398.5px;top:539px" width="8" height="8" viewBox="0 0 8 8"><rect x="0.4" y="0.3" width="1.5" height="6.8" fill="#4a4a4a"/><path d="M6.6 0.3 L6.6 7.1 L1.9 3.7Z" fill="#4a4a4a"/></svg>
<svg class="r" style="left:424px;top:539px" width="6" height="8" viewBox="0 0 6 8"><path d="M5.3 0.3 L5.3 7.1 L0.6 3.7Z" fill="#4a4a4a"/></svg>
<div class="r" style="left:442.5px;top:532px;width:20.5px;height:20px;background:#008a17"></div>
<div class="t" style="left:449.07px;top:537.46px;font-size:12.21px;line-height:12.21px;font-weight:700;color:#d6dcd6;">1</div>
<div class="t" style="left:474.39px;top:537.46px;font-size:12.21px;line-height:12.21px;color:#1e1e1e;">2</div>
<div class="t" style="left:499.21px;top:537.46px;font-size:12.21px;line-height:12.21px;color:#1e1e1e;">3</div>
<svg class="r" style="left:526px;top:539px" width="6" height="8" viewBox="0 0 6 8"><path d="M0.6 0.3 L0.6 7.1 L5.3 3.7Z" fill="#111"/></svg>
<svg class="r" style="left:550.5px;top:539px" width="8" height="8" viewBox="0 0 8 8"><path d="M0.4 0.3 L0.4 7.1 L5.1 3.7Z" fill="#111"/><rect x="5.1" y="0.3" width="1.6" height="6.8" fill="#111"/></svg>
<div class="t" style="left:584.57px;top:537.91px;font-size:11.92px;line-height:11.92px;color:#4a4a4a;transform:scaleX(0.9720);">Hiển thị 1 - 5 trên tổng số 14 bản ghi</div>
<div class="r" style="left:1215px;top:586.5px;width:101px;height:29.0px;background:#008a17;border-radius:4px"></div>
<div class="t" style="left:1245.00px;top:596.37px;font-size:12.79px;line-height:12.79px;font-weight:700;color:#d6dcd6;transform:scaleX(0.9351);">Điều chỉnh</div>
<svg class="r" style="left:1225px;top:593px" width="14" height="15" viewBox="0 0 14 15"><path d="M11.6 5.2 C10.8 3.1,8.9 1.8,6.7 1.8 C4.3 1.8,2.3 3.4,1.7 5.6" fill="none" stroke="#d6dcd6" stroke-width="2"/><path d="M12.6 1.2 L12.6 6.4 L7.6 6.4Z" fill="#d6dcd6"/><path d="M1.8 9.6 C2.6 11.7,4.5 13,6.7 13 C9.1 13,11.1 11.4,11.7 9.2" fill="none" stroke="#d6dcd6" stroke-width="2"/><path d="M0.8 13.6 L0.8 8.4 L5.8 8.4Z" fill="#d6dcd6"/></svg>
<div class="r" style="left:1325px;top:586.5px;width:91.5px;height:29.0px;background:#353f4e;border-radius:4px"></div>
<div class="t" style="left:1358.18px;top:596.07px;font-size:12.79px;line-height:12.79px;font-weight:700;color:#d6dcd6;transform:scaleX(0.9671);">Xuất file</div>
<svg class="r" style="left:1334.5px;top:592px" width="18" height="16" viewBox="0 0 18 16"><path d="M0.7 1.9 L6.4 1.9 L6.4 5.8 L11.6 5.8 L11.6 14.9 L0.7 14.9Z" fill="#d6dcd6"/><path d="M7.2 1.9 L11.4 4.9 L7.2 4.9Z" fill="#d6dcd6"/><rect x="5.8" y="9.4" width="5.8" height="1.4" fill="#353f4e"/><rect x="11.6" y="9.4" width="1.5" height="1.4" fill="#d6dcd6"/><path d="M11.5 6.7 L16.6 10.1 L11.5 13.4Z" fill="#d6dcd6"/></svg>
<div class="r" style="left:363px;top:641px;width:1072px;height:1px;background:#6a78c8"></div>
<div class="r" style="left:363px;top:642px;width:1072px;height:7px;background:#cecdcb"></div>
<div class="r" style="left:364px;top:643px;width:1063px;height:4.5px;background:#8f8f8f;border-radius:3px"></div>
<div class="r" style="left:1513.5px;top:729px;width:72.5px;height:26.5px;background:#0a46c8;border-radius:7px"></div>
<div class="t" style="left:1541.20px;top:737.09px;font-size:12.06px;line-height:12.06px;font-weight:700;color:#d8dce8;transform:scaleX(0.9489);">Hỗ trợ</div>
<svg class="r" style="left:1522px;top:735px" width="16" height="15" viewBox="0 0 16 15"><g transform="translate(0.3,0.2) scale(1.0,1.02)"><path d="M7.6 1.2 C3.8 1.2,0.8 3.5,0.8 6.4 C0.8 7.9,1.6 9.2,2.8 10.1 L1.3 13.4 L5.2 11.4 C6 11.6,6.8 11.7,7.6 11.7 C11.4 11.7,14.4 9.4,14.4 6.4 C14.4 3.5,11.4 1.2,7.6 1.2Z" fill="#d8dce8"/><circle cx="4.7" cy="6.4" r="1" fill="#0a46c8"/><circle cx="7.6" cy="6.4" r="1" fill="#0a46c8"/><circle cx="10.5" cy="6.4" r="1" fill="#0a46c8"/></g></svg>
</body></html>
